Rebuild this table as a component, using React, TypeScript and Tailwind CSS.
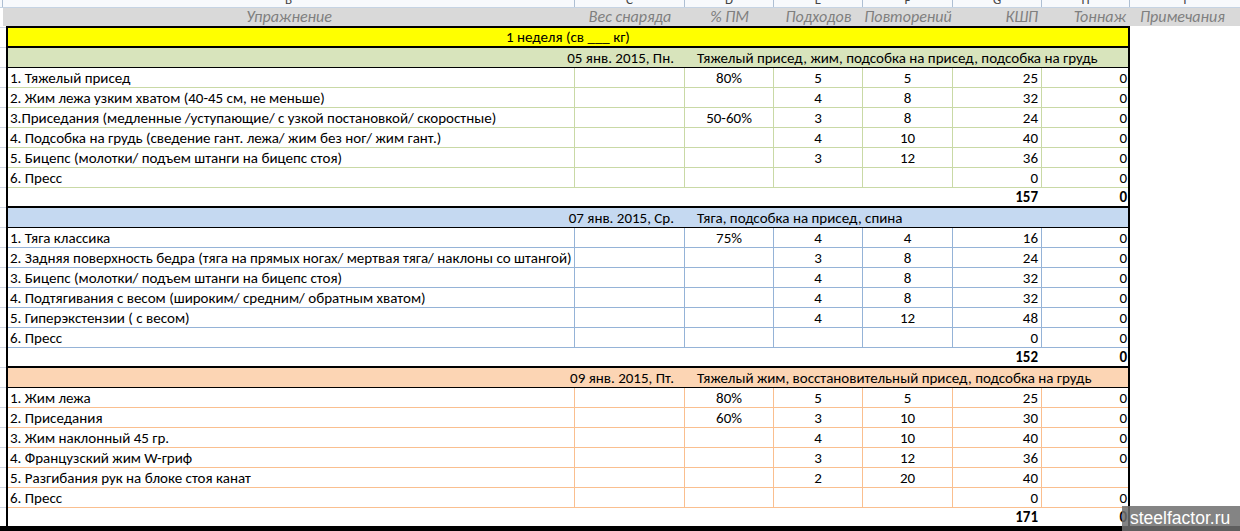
type Row = {
  name: string;
  pm?: string;
  sets?: string;
  reps?: string;
  kshp: string;
  ton?: string;
};

type Day = {
  date: string;
  title: string;
  head: string;
  line: string;
  rows: Row[];
  total: string;
};

const days: Day[] = [
  {
    date: "05 янв. 2015, Пн.",
    title: "Тяжелый присед, жим, подсобка на присед, подсобка на грудь",
    head: "bg-[#d8e4bc]",
    line: "border-[#c9d9a6]",
    total: "157",
    rows: [
      { name: "1. Тяжелый присед", pm: "80%", sets: "5", reps: "5", kshp: "25", ton: "0" },
      { name: "2. Жим лежа узким хватом (40-45 см, не меньше)", sets: "4", reps: "8", kshp: "32", ton: "0" },
      { name: "3.Приседания (медленные /уступающие/ с узкой постановкой/ скоростные)", pm: "50-60%", sets: "3", reps: "8", kshp: "24", ton: "0" },
      { name: "4. Подсобка на грудь (сведение гант. лежа/ жим без ног/ жим гант.)", sets: "4", reps: "10", kshp: "40", ton: "0" },
      { name: "5. Бицепс (молотки/ подъем штанги на бицепс стоя)", sets: "3", reps: "12", kshp: "36", ton: "0" },
      { name: "6. Пресс", kshp: "0", ton: "0" },
    ],
  },
  {
    date: "07 янв. 2015, Ср.",
    title: "Тяга, подсобка на присед, спина",
    head: "bg-[#c5d9f1]",
    line: "border-[#95b3d7]",
    total: "152",
    rows: [
      { name: "1. Тяга классика", pm: "75%", sets: "4", reps: "4", kshp: "16", ton: "0" },
      { name: "2. Задняя поверхность бедра (тяга на прямых ногах/ мертвая тяга/ наклоны со штангой)", sets: "3", reps: "8", kshp: "24", ton: "0" },
      { name: "3. Бицепс (молотки/ подъем штанги на бицепс стоя)", sets: "4", reps: "8", kshp: "32", ton: "0" },
      { name: "4. Подтягивания с весом (широким/ средним/ обратным хватом)", sets: "4", reps: "8", kshp: "32", ton: "0" },
      { name: "5. Гиперэкстензии ( с весом)", sets: "4", reps: "12", kshp: "48", ton: "0" },
      { name: "6. Пресс", kshp: "0", ton: "0" },
    ],
  },
  {
    date: "09 янв. 2015, Пт.",
    title: "Тяжелый жим, восстановительный присед, подсобка на грудь",
    head: "bg-[#fcd5b4]",
    line: "border-[#fabf8f]",
    total: "171",
    rows: [
      { name: "1. Жим лежа", pm: "80%", sets: "5", reps: "5", kshp: "25", ton: "0" },
      { name: "2. Приседания", pm: "60%", sets: "3", reps: "10", kshp: "30", ton: "0" },
      { name: "3. Жим наклонный 45 гр.", sets: "4", reps: "10", kshp: "40", ton: "0" },
      { name: "4. Французский жим W-гриф", sets: "3", reps: "12", kshp: "36", ton: "0" },
      { name: "5. Разгибания рук на блоке стоя канат", sets: "2", reps: "20", kshp: "40" },
      { name: "6. Пресс", kshp: "0", ton: "0" },
    ],
  },
];

function DataRow({ row, line }: { row: Row; line: string }) {
  return (
    <div className={`flex h-[20px] border-b leading-[20px] ${line}`}>
      <div className={`w-[567px] border-r pl-[2px] whitespace-nowrap ${line}`}>{row.name}</div>
      <div className={`w-[110px] border-r ${line}`} />
      <div className={`w-[89px] border-r text-center ${line}`}>{row.pm}</div>
      <div className={`w-[89px] border-r text-center ${line}`}>{row.sets}</div>
      <div className={`w-[90px] border-r text-center ${line}`}>{row.reps}</div>
      <div className={`w-[89px] border-r pr-[3px] text-right ${line}`}>{row.kshp}</div>
      <div className="w-[86px] pr-[1px] text-right">{row.ton}</div>
    </div>
  );
}

function DayBlock({ day }: { day: Day }) {
  return (
    <div>
      <div className={`flex h-[22px] border-t-2 border-b border-black leading-[20px] ${day.head}`}>
        <div className="w-[677px] pr-[11px] text-right whitespace-nowrap">{day.date}</div>
        <div className="pl-[12px] whitespace-nowrap">{day.title}</div>
      </div>
      {day.rows.map((r, i) => (
        <DataRow key={i} row={r} line={day.line} />
      ))}
      <div className="flex h-[18px] leading-[19px] font-bold">
        <div className="w-[945px]" />
        <div className="w-[89px] pr-[4px] text-right">{day.total}</div>
        <div className="w-[86px] pr-[1px] text-right">0</div>
      </div>
    </div>
  );
}

export default function App() {
  return (
    <div className="relative h-[531px] w-[1240px] overflow-hidden bg-white font-[family-name:Carlito,Lato,sans-serif] text-[15px] text-black">
      {/* column letters, cut off at the top */}
      <div className="flex h-[8px] overflow-hidden border-b border-[#c5d3e3] bg-[#f7f9fc] text-[13px] leading-none text-[#444]">
        <div className="w-[3px] border-r border-[#aebfd3]" />
        {[
          ["B", "w-[572px]"],
          ["C", "w-[110px]"],
          ["D", "w-[89px]"],
          ["E", "w-[89px]"],
          ["F", "w-[90px]"],
          ["G", "w-[89px]"],
          ["H", "w-[88px]"],
        ].map(([l, w]) => (
          <div key={l} className={`${w} border-r border-[#aebfd3] text-center`}>
            <span className="mt-[-7px] block">{l}</span>
          </div>
        ))}
        <div className="flex-1 text-center">
          <span className="mt-[-7px] block">I</span>
        </div>
      </div>

      {/* column captions */}
      <div className="flex h-[18px] text-[16px] italic leading-[18px] text-[#7f7f7f]">
        <div className="w-[3px]" />
        <div className="flex flex-1 bg-[#d9d9d9]">
          <div className="w-[572px] text-center">Упражнение</div>
          <div className="w-[110px] text-center">Вес снаряда</div>
          <div className="w-[89px] text-center">% ПМ</div>
          <div className="w-[89px] text-center whitespace-nowrap">Подходов</div>
          <div className="w-[90px] text-center whitespace-nowrap">Повторений</div>
          <div className="w-[89px] pr-[4px] text-right">КШП</div>
          <div className="w-[88px] pr-[4px] text-right">Тоннаж</div>
          <div className="flex-1 pl-[10px] whitespace-nowrap">Примечания</div>
        </div>
      </div>

      <div className="flex">
        <div className="w-[6px]">
          <div className="h-[2px] border-b border-[#d0d7e5]" />
          {Array.from({ length: 25 }).map((_, i) => (
            <div key={i} className="h-[20px] border-b border-[#d0d7e5]" />
          ))}
        </div>
        <div className="w-[1124px] border-x-2 border-t-2 border-black">
          <div className="h-[18px] bg-[#ffff00] text-center leading-[19px]">1 неделя (св ___ кг)</div>
          {days.map((d) => (
            <DayBlock key={d.date} day={d} />
          ))}
        </div>
      </div>

      <div className="absolute inset-x-0 top-[526px] h-[6px] bg-black" />

      <div className="absolute right-0 top-[506px] flex h-[25px] w-[118px] items-center bg-[rgba(110,110,110,0.85)] pl-[8px] font-[family-name:'Liberation_Sans',Arial,sans-serif] text-[17.5px] text-white">
        steelfactor.ru
      </div>
    </div>
  );
}
